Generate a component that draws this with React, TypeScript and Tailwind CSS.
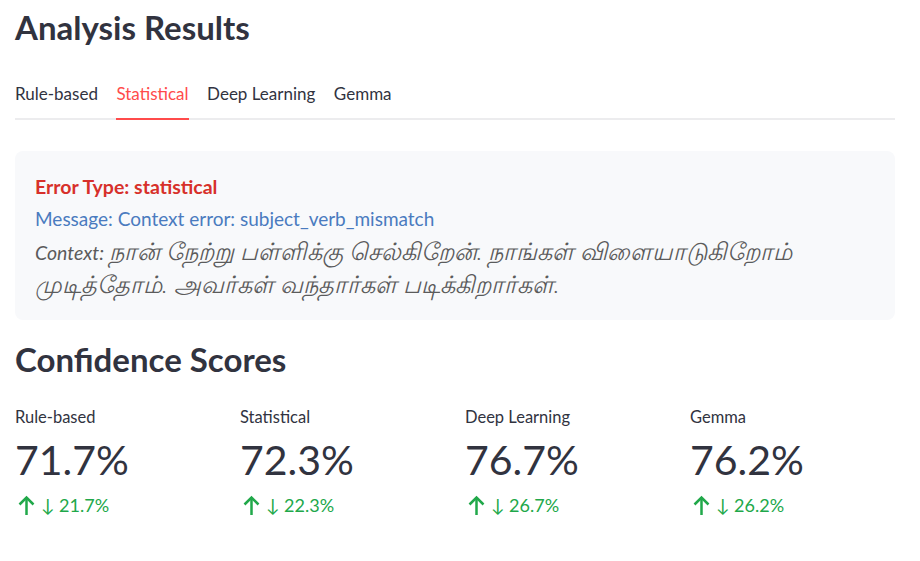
const font = { fontFamily: 'Lato, "Noto Sans", sans-serif' };

const tabs = ['Rule-based', 'Statistical', 'Deep Learning', 'Gemma'];

const scores = [
  { label: 'Rule-based', value: '71.7%', delta: '21.7%' },
  { label: 'Statistical', value: '72.3%', delta: '22.3%' },
  { label: 'Deep Learning', value: '76.7%', delta: '26.7%' },
  { label: 'Gemma', value: '76.2%', delta: '26.2%' },
];

function Tabs() {
  return (
    <div className="mt-[32px] flex gap-[18.5px] border-b-2 border-[#ececee]">
      {tabs.map((t) => {
        const active = t === 'Statistical';
        return (
          <div
            key={t}
            className={
              active
                ? 'relative pb-[11px] text-[17px] leading-[26px] text-[#ff4b4b]'
                : 'relative pb-[11px] text-[17px] leading-[26px] text-[#31333f]'
            }
          >
            {t}
            {active && <div className="absolute -bottom-[2px] left-0 right-0 h-[2px] bg-[#ff4b4b]" />}
          </div>
        );
      })}
    </div>
  );
}

function ErrorCard() {
  return (
    <div className="mt-[31px] rounded-lg bg-[#f8f9fb] px-5 pt-[20px] pb-[19px]">
      <div className="text-[19.5px] font-bold leading-[32px] text-[#d7302a]">Error Type: statistical</div>
      <div className="text-[19px] leading-[32px] text-[#4a7bbf]">Message: Context error: subject_verb_mismatch</div>
      <div className="text-[19.5px] italic leading-[31px] text-[#5b5b5b]">
        Context:{' '}
        <span className="text-[24px] leading-[31px] font-light">
          நான் நேற்று பள்ளிக்கு செல்கிறேன். நாங்கள் விளையாடுகிறோம் முடித்தோம். அவர்கள் வந்தார்கள் படிக்கிறார்கள்.
        </span>
      </div>
    </div>
  );
}

function UpArrow() {
  return (
    <svg width="17" height="21" viewBox="0 0 17 21" fill="none" stroke="currentColor" strokeWidth="2.5">
      <path d="M8.5 20V2.5" />
      <path d="M1.5 9.5l7-7 7 7" />
    </svg>
  );
}

function Metric({ label, value, delta }: { label: string; value: string; delta: string }) {
  return (
    <div className="flex flex-col">
      <div className="text-[16.5px] leading-[24px] text-[#31333f]">{label}</div>
      <div className="mt-[3px] text-[41px] leading-[56px] text-[#31333f]">{value}</div>
      <div className="mt-[5px] flex items-center gap-[6px] pl-[3px] text-[18px] leading-[24px] text-[#21a84a]">
        <UpArrow />
        <span>↓ {delta}</span>
      </div>
    </div>
  );
}

export default function App() {
  return (
    <div className="min-h-screen bg-white pr-[25px] pl-[15px] pt-[5px]" style={font}>
      <h1 className="text-[33px] font-bold leading-[44px] text-[#31333f]">Analysis Results</h1>
      <Tabs />
      <ErrorCard />
      <h2 className="mt-[17px] text-[33px] font-bold leading-[44px] text-[#31333f]">Confidence Scores</h2>
      <div className="mt-[24px] grid grid-cols-4 gap-5">
        {scores.map((s) => (
          <Metric key={s.label} {...s} />
        ))}
      </div>
    </div>
  );
}
